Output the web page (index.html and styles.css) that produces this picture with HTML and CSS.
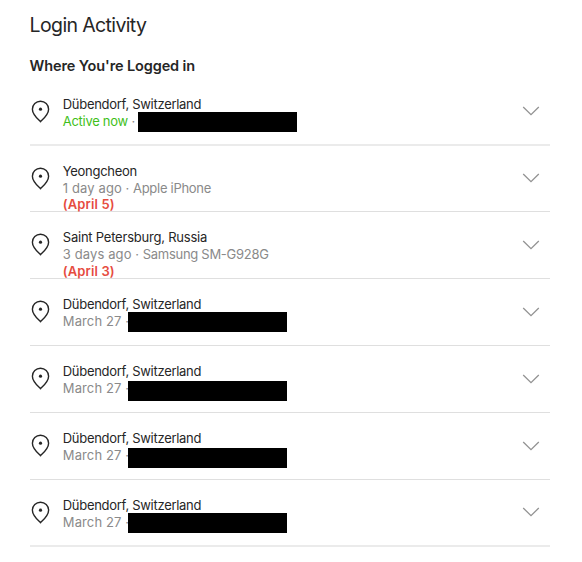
FILE: index.html
```html
<!DOCTYPE html>
<html lang="en">
<head>
<meta charset="utf-8">
<title>Login Activity</title>
<link rel="stylesheet" href="styles.css">
</head>
<body>
<svg width="0" height="0" class="defs">
  <symbol id="pin" viewBox="0 0 20 24">
    <path d="M10.500 21.700C8.600 19.600 2.400 14.800 2.400 9.200A8.100 8 0 0 1 18.600 9.200C18.600 14.800 12.400 19.600 10.500 21.700Z" fill="none" stroke="#262626" stroke-width="1.400" stroke-linejoin="round"/>
    <circle cx="10.500" cy="9.200" r="1.600" fill="#262626"/>
  </symbol>
  <symbol id="chevron" viewBox="0 0 18 10">
    <path d="M1.200 1L9 8.700L16.800 1" fill="none" stroke="#929292" stroke-width="1.300"/>
  </symbol>
</svg>
<main class="page">
  <h1 class="title">Login Activity</h1>
  <h2 class="subtitle">Where You're Logged in</h2>
  <ul class="sessions">
    <li class="session">
      <svg class="pin"><use href="#pin"/></svg>
      <div class="info"><p class="place">Dübendorf, Switzerland</p><p class="detail"><span class="active">Active now</span> ·</p><span class="redaction wide"></span></div>
      <svg class="chevron"><use href="#chevron"/></svg>
    </li>
    <li class="session">
      <svg class="pin"><use href="#pin"/></svg>
      <div class="info"><p class="place">Yeongcheon</p><p class="detail"><span class="ago">1 day ago</span> · <span class="device">Apple iPhone</span></p><p class="note raised">(April 5)</p></div>
      <svg class="chevron"><use href="#chevron"/></svg>
    </li>
    <li class="session">
      <svg class="pin"><use href="#pin"/></svg>
      <div class="info"><p class="place petersburg">Saint Petersburg, Russia</p><p class="detail"><span class="ago">3 days ago</span> · <span class="device">Samsung SM-G928G</span></p><p class="note">(April 3)</p></div>
      <svg class="chevron"><use href="#chevron"/></svg>
    </li>
    <li class="session">
      <svg class="pin"><use href="#pin"/></svg>
      <div class="info"><p class="place">Dübendorf, Switzerland</p><p class="detail"><span class="date">March 27</span> ·</p><span class="redaction"></span></div>
      <svg class="chevron"><use href="#chevron"/></svg>
    </li>
    <li class="session">
      <svg class="pin"><use href="#pin"/></svg>
      <div class="info"><p class="place">Dübendorf, Switzerland</p><p class="detail"><span class="date">March 27</span> ·</p><span class="redaction low"></span></div>
      <svg class="chevron"><use href="#chevron"/></svg>
    </li>
    <li class="session">
      <svg class="pin"><use href="#pin"/></svg>
      <div class="info"><p class="place">Dübendorf, Switzerland</p><p class="detail"><span class="date">March 27</span> ·</p><span class="redaction low"></span></div>
      <svg class="chevron"><use href="#chevron"/></svg>
    </li>
    <li class="session">
      <svg class="pin"><use href="#pin"/></svg>
      <div class="info"><p class="place">Dübendorf, Switzerland</p><p class="detail"><span class="date">March 27</span> ·</p><span class="redaction"></span></div>
      <svg class="chevron"><use href="#chevron"/></svg>
    </li>
  </ul>
</main>
</body>
</html>
```
FILE: styles.css
```css
* { box-sizing: border-box; margin: 0; padding: 0; }
body { background: #fff; color: #262626; font-family: Inter, "Liberation Sans", sans-serif; overflow: hidden; }
.defs { position: absolute; }
.page { width: 520px; margin-left: 29.6px; padding-top: 12px; }
.title { font-size: 19.5px; line-height: 26px; font-weight: 400; letter-spacing: -0.63px; }
.subtitle { margin-top: 18px; font-size: 14.5px; line-height: 20px; font-weight: 600; letter-spacing: -0.12px; }
.sessions { list-style: none; margin-top: 2.8px; }
.session { display: flex; align-items: flex-start; height: 66.85px; border-bottom: 1px solid #dfdfdf; }
.session:first-child, .session:last-child { border-bottom: 2px solid #ebebeb; }
.pin { flex: none; width: 20px; height: 24px; margin-top: 21px; }
.info { position: relative; flex: 1; margin-left: 13.2px; padding-top: 17px; font-size: 13px; line-height: 17px; white-space: nowrap; }
.place { letter-spacing: -0.29px; }
.petersburg { letter-spacing: -0.22px; }
.detail { color: #8a8a8a; }
.active { color: #3fbf1b; letter-spacing: -0.3px; }
.ago, .date { letter-spacing: 0.12px; }
.device { letter-spacing: -0.28px; }
.note { color: #e64c3f; font-size: 13px; font-weight: 600; line-height: 16px; letter-spacing: 0.12px; }
.note.raised { margin-top: -1px; }
.redaction { position: absolute; left: 65.2px; top: 33px; width: 159px; height: 20px; background: #000; }
.redaction.wide { left: 75.2px; }
.redaction.low { top: 35px; }
.chevron { flex: none; width: 18px; height: 10px; margin: 27.5px 9.600px 0 0; }
```
